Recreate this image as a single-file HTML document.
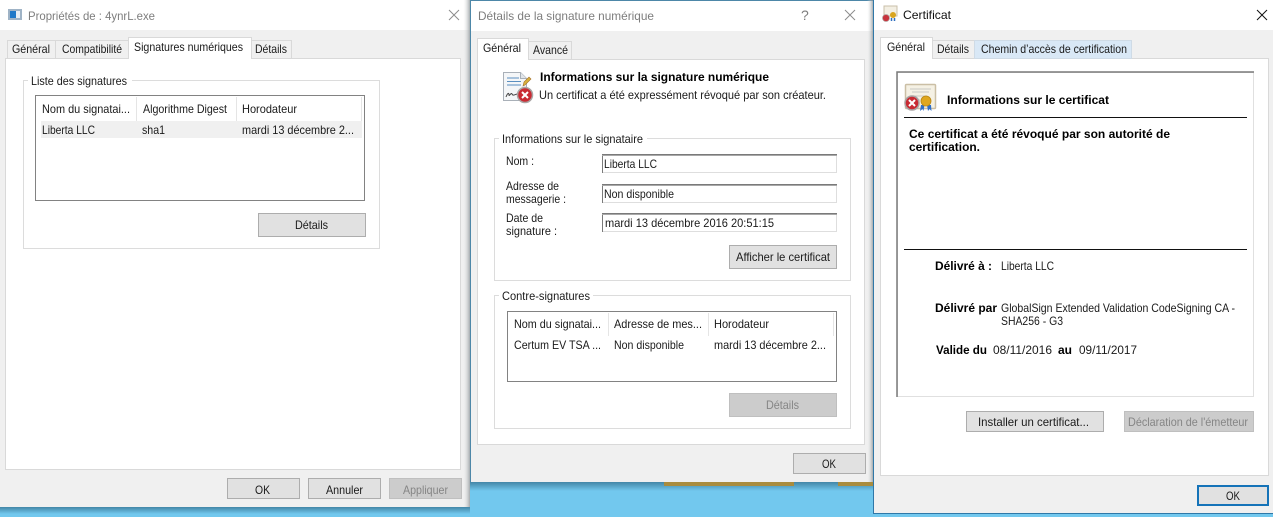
<!DOCTYPE html>
<html lang="fr"><head><meta charset="utf-8"><title>Propriétés</title>
<style>
html,body{margin:0;padding:0;background:#72c8ee;width:1273px;height:517px;overflow:hidden}
svg{display:block;position:absolute;left:0;top:0}
text{font-family:"Liberation Sans",sans-serif;font-size:12px;fill:#1a1a1a}
.g{fill:#7d7d7d}
.d{fill:#858585}
.b{font-weight:bold;fill:#000}
.btn{fill:#e1e1e1;stroke:#adadad}
.dis{fill:#cccccc;stroke:#bfbfbf}
.pan{fill:#fff;stroke:#d9d9d9}
.grp{fill:#fff;stroke:#dcdcdc}
.lst{fill:#fff;stroke:#828282}
.tab{fill:#f0f0f0;stroke:#d9d9d9}
.sep{stroke:#e5e5e5}
</style></head><body>
<svg width="1273" height="517" viewBox="0 0 1273 517" xmlns="http://www.w3.org/2000/svg">
<defs>
<linearGradient id="sh" x1="0" x2="0" y1="0" y2="1"><stop offset="0" stop-color="#33708f"/><stop offset="1" stop-color="#72c8ee"/></linearGradient>
<linearGradient id="sr" x1="0" x2="1" y1="0" y2="0"><stop offset="0" stop-color="#f0f0f0" stop-opacity="0"/><stop offset="1" stop-color="#8a9296" stop-opacity=".75"/></linearGradient>
</defs>
<rect width="1273" height="517" fill="#72c8ee"/>
<rect x="470" y="482" width="403" height="9" fill="url(#sh)" opacity=".75"/>
<rect x="0" y="507" width="470" height="7" fill="url(#sh)" opacity=".75"/>
<rect x="664" y="482" width="130" height="4" fill="#a98c3e"/>
<rect x="838" y="482" width="36" height="4" fill="#a98c3e"/>

<!-- Window 1 -->
<rect x="0" y="0" width="470" height="507" fill="#f0f0f0"/>
<rect x="0" y="0" width="470" height="30" fill="#fff"/>
<rect x="8" y="9" width="14" height="11" fill="#9fb3c6"/><rect x="10" y="11" width="6" height="7" fill="#1f78c8"/><rect x="16" y="11" width="4" height="7" fill="#e8eef4"/>
<text class="g" x="28" y="20" textLength="127" lengthAdjust="spacingAndGlyphs">Propriétés de : 4ynrL.exe</text>
<path d="M449 10l10 10M459 10l-10 10" stroke="#8c8c8c" fill="none"/>
<rect class="pan" x="5.5" y="58.5" width="455" height="411"/>
<rect class="tab" x="7.5" y="40.5" width="48" height="18"/>
<rect class="tab" x="55.5" y="40.5" width="73" height="18"/>
<rect class="tab" x="251.5" y="40.5" width="40" height="18"/>
<rect x="128.5" y="37.5" width="123" height="21" fill="#fff" stroke="#d9d9d9"/><rect x="129" y="57" width="122" height="3" fill="#fff"/>
<text x="12" y="53" textLength="38" lengthAdjust="spacingAndGlyphs">Général</text>
<text x="62" y="53" textLength="60" lengthAdjust="spacingAndGlyphs">Compatibilité</text>
<text x="134" y="51" textLength="109" lengthAdjust="spacingAndGlyphs">Signatures numériques</text>
<text x="255" y="53" textLength="32" lengthAdjust="spacingAndGlyphs">Détails</text>
<rect class="grp" x="23.5" y="80.5" width="356" height="168"/>
<rect x="28" y="76" width="104" height="10" fill="#fff"/>
<text x="31" y="85" textLength="96" lengthAdjust="spacingAndGlyphs">Liste des signatures</text>
<rect class="lst" x="35.5" y="95.5" width="329" height="105"/>
<path class="sep" d="M136.5 97v24M236.5 97v24M361.5 97v24"/>
<rect x="41" y="121" width="321" height="17" fill="#f0f0f0"/>
<text x="42" y="113" textLength="88" lengthAdjust="spacingAndGlyphs">Nom du signatai...</text>
<text x="143" y="113" textLength="84" lengthAdjust="spacingAndGlyphs">Algorithme Digest</text>
<text x="242" y="113" textLength="55" lengthAdjust="spacingAndGlyphs">Horodateur</text>
<text x="42" y="134" textLength="53" lengthAdjust="spacingAndGlyphs">Liberta LLC</text>
<text x="142" y="134" textLength="23" lengthAdjust="spacingAndGlyphs">sha1</text>
<text x="242" y="134" textLength="112" lengthAdjust="spacingAndGlyphs">mardi 13 décembre 2...</text>
<rect class="btn" x="258.5" y="213.5" width="107" height="23"/>
<text x="295" y="229" textLength="33" lengthAdjust="spacingAndGlyphs">Détails</text>
<rect class="btn" x="227.5" y="478.5" width="72" height="20"/>
<rect class="btn" x="308.5" y="478.5" width="72" height="20"/>
<rect class="dis" x="389.5" y="478.5" width="72" height="20"/>
<text x="255" y="494" textLength="15" lengthAdjust="spacingAndGlyphs">OK</text>
<text x="326" y="494" textLength="37" lengthAdjust="spacingAndGlyphs">Annuler</text>
<text class="d" x="403" y="494" textLength="45" lengthAdjust="spacingAndGlyphs">Appliquer</text>
<rect x="463" y="0" width="7" height="507" fill="url(#sr)"/>

<!-- Window 2 -->
<rect x="470" y="0" width="403" height="482" fill="#f0f0f0"/>
<rect x="470" y="0" width="403" height="31" fill="#fff"/>
<path d="M470.5 482V.5H873" stroke="#4d87a8" fill="none"/>
<text class="g" x="478" y="20" textLength="176" lengthAdjust="spacingAndGlyphs">Détails de la signature numérique</text>
<text class="g" x="801" y="20" style="font-size:14px">?</text>
<path d="M845 10l10 10M855 10l-10 10" stroke="#8c8c8c" fill="none"/>
<rect class="pan" x="477.5" y="59.5" width="387" height="385"/>
<rect class="tab" x="528.5" y="41.5" width="43" height="18"/>
<rect x="477.5" y="38.5" width="51" height="21" fill="#fff" stroke="#d9d9d9"/><rect x="478" y="58" width="50" height="3" fill="#fff"/>
<text x="483" y="52" textLength="38" lengthAdjust="spacingAndGlyphs">Général</text>
<text x="533" y="54" textLength="35" lengthAdjust="spacingAndGlyphs">Avancé</text>
<!-- doc icon -->
<path d="M503.500 72.500h17l6 6v22h-23z" fill="#f4f6f8" stroke="#a9b0b8"/>
<path d="M520.500 72.500v6h6" fill="#e1e5e9" stroke="#a9b0b8"/>
<path d="M507 78h12M507 81.500h14M507 85h14" stroke="#5a8fc0" fill="none"/>
<path d="M524 82l5-5 2 2-6 6-2 1z" fill="#d8b13c" stroke="#a5702a" stroke-width=".6"/>
<path d="M506 97c2-5 3-4 3-2s2-3 3-1 2 1 5 0" stroke="#444" fill="none"/>
<circle cx="525" cy="95" r="7.500" fill="#c92a32" stroke="#a9a4a4" stroke-width="1.500"/>
<path d="M522 92l6 6M528 92l-6 6" stroke="#fff" stroke-width="2"/>
<text class="b" x="540" y="81" textLength="229" lengthAdjust="spacingAndGlyphs">Informations sur la signature numérique</text>
<text x="539" y="99" textLength="287" lengthAdjust="spacingAndGlyphs">Un certificat a été expressément révoqué par son créateur.</text>
<rect class="grp" x="494.500" y="138.500" width="356" height="142"/>
<rect x="499" y="134" width="148" height="10" fill="#fff"/>
<text x="502" y="143" textLength="141" lengthAdjust="spacingAndGlyphs">Informations sur le signataire</text>
<text x="506" y="165" textLength="28" lengthAdjust="spacingAndGlyphs">Nom :</text>
<text x="506" y="190" textLength="53" lengthAdjust="spacingAndGlyphs">Adresse de</text>
<text x="506" y="203" textLength="60" lengthAdjust="spacingAndGlyphs">messagerie :</text>
<text x="506" y="222" textLength="37" lengthAdjust="spacingAndGlyphs">Date de</text>
<text x="506" y="235" textLength="51" lengthAdjust="spacingAndGlyphs">signature :</text>
<g fill="#fff" stroke="#dedede">
<rect x="602.500" y="154.500" width="234" height="18"/>
<rect x="602.500" y="184.500" width="234" height="18"/>
<rect x="602.500" y="213.500" width="234" height="18"/>
</g>
<path d="M602.500 173V154.500H837M602.500 203V184.500H837M602.500 232V213.500H837" stroke="#7a7a7a" fill="none"/>
<path d="M602 155.500H837M602 185.500H837M602 214.500H837" stroke="#a8a8a8" fill="none"/>
<text x="604" y="168" textLength="53" lengthAdjust="spacingAndGlyphs">Liberta LLC</text>
<text x="604" y="198" textLength="70" lengthAdjust="spacingAndGlyphs">Non disponible</text>
<text x="605" y="227" textLength="169" lengthAdjust="spacingAndGlyphs">mardi 13 décembre 2016 20:51:15</text>
<rect class="btn" x="729.500" y="245.500" width="107" height="23"/>
<text x="736" y="261" textLength="94" lengthAdjust="spacingAndGlyphs">Afficher le certificat</text>
<rect class="grp" x="494.500" y="295.500" width="356" height="133"/>
<rect x="499" y="291" width="94" height="10" fill="#fff"/>
<text x="502" y="300" textLength="88" lengthAdjust="spacingAndGlyphs">Contre-signatures</text>
<rect class="lst" x="507.500" y="311.500" width="329" height="70"/>
<path class="sep" d="M608.500 313v23M708.500 313v23M833.500 313v23"/>
<text x="514" y="328" textLength="87" lengthAdjust="spacingAndGlyphs">Nom du signatai...</text>
<text x="614" y="328" textLength="88" lengthAdjust="spacingAndGlyphs">Adresse de mes...</text>
<text x="714" y="328" textLength="55" lengthAdjust="spacingAndGlyphs">Horodateur</text>
<text x="514" y="349" textLength="87" lengthAdjust="spacingAndGlyphs">Certum EV TSA ...</text>
<text x="614" y="349" textLength="70" lengthAdjust="spacingAndGlyphs">Non disponible</text>
<text x="714" y="349" textLength="112" lengthAdjust="spacingAndGlyphs">mardi 13 décembre 2...</text>
<rect class="dis" x="729.500" y="393.500" width="107" height="23"/>
<text class="d" x="766" y="409" textLength="33" lengthAdjust="spacingAndGlyphs">Détails</text>
<rect class="btn" x="793.500" y="453.500" width="72" height="20"/>
<text x="822" y="468" textLength="14" lengthAdjust="spacingAndGlyphs">OK</text>
<rect x="867" y="0" width="6" height="482" fill="url(#sr)"/>

<!-- Window 3 -->
<rect x="873" y="0" width="400" height="513" fill="#f0f0f0"/>
<rect x="873" y="0" width="400" height="30" fill="#fff"/>
<path d="M873.500 0V513.500H1273" stroke="#2f78a8" fill="none"/>
<rect x="884" y="6" width="13" height="10" fill="#f3efe3" stroke="#c9bfa8"/>
<circle cx="886" cy="18" r="3.500" fill="#c7343c" stroke="#b2a0a0" stroke-width=".7"/>
<circle cx="893" cy="15" r="3" fill="#d9a520"/><path d="M891.500 18v3M894.500 18v3" stroke="#2f6fc0" stroke-width="1.500"/>
<text x="903" y="19" textLength="48" lengthAdjust="spacingAndGlyphs" style="fill:#111">Certificat</text>
<path d="M1257 10l10 10M1267 10l-10 10" stroke="#111" fill="none"/>
<rect class="pan" x="880.500" y="58.500" width="388" height="417"/>
<rect class="tab" x="932.500" y="40.500" width="42" height="18"/>
<rect x="974.500" y="40.500" width="157" height="18" fill="#d9e8f6" stroke="#cfdbe6"/>
<rect x="880.500" y="37.500" width="52" height="21" fill="#fff" stroke="#d9d9d9"/><rect x="881" y="57" width="51" height="3" fill="#fff"/>
<text x="887" y="51" textLength="38" lengthAdjust="spacingAndGlyphs">Général</text>
<text x="937" y="53" textLength="32" lengthAdjust="spacingAndGlyphs">Détails</text>
<text x="981" y="53" textLength="146" lengthAdjust="spacingAndGlyphs">Chemin d’accès de certification</text>
<rect x="897.500" y="72.500" width="356" height="324" fill="#fff" stroke="#e0e0e0"/>
<path d="M897 397V72H1254" stroke="#7a7a7a" stroke-width="1.500" fill="none"/>
<!-- cert icon -->
<rect x="905.500" y="84.500" width="30" height="24" rx="1" fill="#f5f1e4" stroke="#cbbfa5" stroke-width="1.500"/>
<path d="M910 89h21M912 92h17M914 96h13M910 100h10" stroke="#c9c9c4" fill="none"/>
<path d="M921 105l-1 6 2.500-2 1 2 1-6zM927 105l1 6 1.500-2 2 2-.5-6z" fill="#2f6fc8"/>
<circle cx="926" cy="101" r="5" fill="#dfa71e" stroke="#b98613" stroke-width=".8"/>
<circle cx="912" cy="103" r="7" fill="#c92a32" stroke="#a9a4a4" stroke-width="1.500"/>
<path d="M909 100l6 6M915 100l-6 6" stroke="#fff" stroke-width="2"/>
<text class="b" x="947" y="104" textLength="162" lengthAdjust="spacingAndGlyphs">Informations sur le certificat</text>
<rect x="904" y="117" width="343" height="1" fill="#111"/>
<text class="b" x="909" y="138" textLength="261" lengthAdjust="spacingAndGlyphs">Ce certificat a été révoqué par son autorité de</text>
<text class="b" x="909" y="151" textLength="71" lengthAdjust="spacingAndGlyphs">certification.</text>
<rect x="904" y="249" width="343" height="1" fill="#111"/>
<text class="b" x="935" y="270" textLength="57" lengthAdjust="spacingAndGlyphs">Délivré à :</text>
<text x="1001" y="270" textLength="53" lengthAdjust="spacingAndGlyphs">Liberta LLC</text>
<text class="b" x="935" y="312" textLength="62" lengthAdjust="spacingAndGlyphs">Délivré par</text>
<text x="1001" y="312" textLength="234" lengthAdjust="spacingAndGlyphs">GlobalSign Extended Validation CodeSigning CA -</text>
<text x="1001" y="325" textLength="62" lengthAdjust="spacingAndGlyphs">SHA256 - G3</text>
<text class="b" x="936" y="354" textLength="51" lengthAdjust="spacingAndGlyphs">Valide du</text>
<text x="993" y="354" textLength="59" lengthAdjust="spacingAndGlyphs">08/11/2016</text>
<text class="b" x="1058" y="354" textLength="14" lengthAdjust="spacingAndGlyphs">au</text>
<text x="1079" y="354" textLength="58" lengthAdjust="spacingAndGlyphs">09/11/2017</text>
<rect class="btn" x="966.500" y="411.500" width="137" height="20"/>
<text x="978" y="426" textLength="111" lengthAdjust="spacingAndGlyphs">Installer un certificat...</text>
<rect class="dis" x="1124.500" y="411.500" width="129" height="20"/>
<text class="d" x="1128" y="426" textLength="120" lengthAdjust="spacingAndGlyphs">Déclaration de l'émetteur</text>
<rect x="1198" y="486" width="70" height="19" fill="#e1e1e1" stroke="#1573b8" stroke-width="2"/>
<text x="1226" y="500" textLength="14" lengthAdjust="spacingAndGlyphs">OK</text>
</svg>
</body></html>
